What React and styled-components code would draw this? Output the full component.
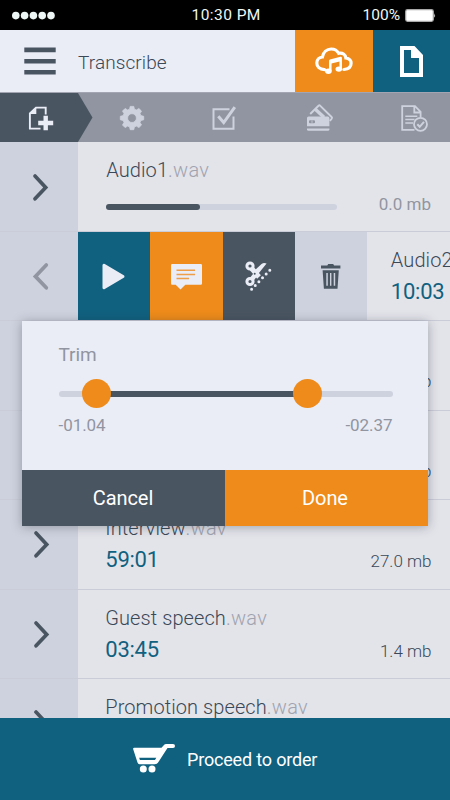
import React from "react";
import styled, { createGlobalStyle } from "styled-components";

const c = {
  slate: "#4a5562", ink: "#3a4857", teal: "#10617f", orange: "#ee8b1a", pale: "#eaedf6",
  mist: "#ced2de", row: "#e3e4ea", grey: "#9195a1", line: "#cacdd8",
};

const Global = createGlobalStyle`
  * { box-sizing: border-box; }
  body { margin: 0; font-family: Roboto, "Liberation Sans", sans-serif; }
  button { font: inherit; border: 0; padding: 0; margin: 0; }
  svg { display: block; flex: none; overflow: visible; }
`;

const Screen = styled.main`
  position: relative;
  width: 450px;
  height: 800px;
  display: flex;
  flex-direction: column;
  overflow: hidden;
  background: ${c.row};
`;

const StatusBar = styled.div`
  height: 30px;
  flex: none;
  display: grid;
  grid-template-columns: 179.5px auto 1fr;
  align-items: center;
  padding: 1px 14px 0 12px;
  background: #000;
  color: #eef7f5;
  font-size: 15.5px;
  line-height: 29px;
`;
const Clock = styled.span`
  letter-spacing: 0.45px;
`;
const Power = styled.div`
  display: flex;
  align-items: center;
  justify-content: flex-end;
  gap: 5px;
`;

const Header = styled.header`
  height: 63px;
  flex: none;
  display: flex;
  background: ${c.pale};
  border-bottom: 1px solid #a3a6b2;
`;
const MenuButton = styled.button`
  width: 78px;
  padding: 0 0 0 24px;
  background: none;
`;
const Title = styled.h1`
  flex: 1;
  margin: 0;
  font-size: 19px;
  font-weight: 350;
  line-height: 65px;
  letter-spacing: 0.1px;
  color: ${c.ink};
`;
const HeaderButton = styled.button`
  width: ${(p) => p.$w}px;
  display: flex;
  align-items: center;
  justify-content: center;
  background: ${(p) => p.$bg};
`;

const Steps = styled.nav`
  height: 49px;
  flex: none;
  display: flex;
  background: ${c.grey};
`;
const Step = styled.div`
  width: ${(p) => p.$w}px;
  display: flex;
  align-items: center;
  padding-left: ${(p) => p.$pad}px;
  padding-top: 1px;
  background: ${(p) => (p.$active ? c.slate : "transparent")};
  clip-path: ${(p) => (p.$active ? "polygon(0 0, 78px 0, 92.5px 24.5px, 78px 100%, 0 100%)" : "none")};
`;

const List = styled.section`
  flex: 1;
  min-height: 0;
  overflow: hidden;
`;
const Row = styled.div`
  height: ${(p) => p.$h}px;
  display: flex;
  background: ${c.row};
  border-bottom: 1px solid ${c.line};
`;
const Toggle = styled.button`
  width: 77.8px;
  flex: none;
  padding: ${(p) => p.$top || 32}px 0 0 ${(p) => p.$left || 33}px;
  display: flex;
  align-items: flex-start;
  background: ${c.mist};
`;
const Action = styled.button`
  width: 72.4px;
  flex: none;
  display: flex;
  align-items: center;
  justify-content: center;
  background: ${(p) => p.$bg};
`;
const Content = styled.div`
  flex: ${(p) => (p.$shifted ? "none" : "1")};
  width: ${(p) => (p.$shifted ? "372px" : "auto")};
  padding: 16px 18.5px 0 ${(p) => p.$left || 28.5}px;
`;
const Name = styled.div`
  height: 24px;
  line-height: 24px;
  font-size: 20px;
  font-weight: 350;
  letter-spacing: 0.08px;
  color: ${c.ink};
  white-space: nowrap;
`;
const Ext = styled.span`
  color: #a0a3af;
  font-weight: 300;
  letter-spacing: 0.25px;
`;
const Meta = styled.div`
  display: flex;
  justify-content: space-between;
  align-items: baseline;
  margin-top: 7px;
  line-height: 26px;
`;
const Time = styled.span`
  font-size: 22px;
  color: ${c.teal};
  letter-spacing: -0.25px;
`;
const Size = styled.span`
  margin-left: auto;
  font-size: 17px;
  font-weight: ${(p) => (p.$muted ? 400 : 350)};
  color: ${(p) => (p.$muted ? c.grey : c.ink)};
`;
const Upload = styled.div`
  display: flex;
  align-items: center;
  margin-top: 9px;
  padding-right: 0.5px;
  line-height: 26px;
`;
const Progress = styled.div`
  width: 231px;
  height: 6px;
  margin-top: 6px;
  border-radius: 3px;
  background: ${c.mist};
`;
const ProgressFill = styled.div`
  width: 94px;
  height: 6px;
  border-radius: 3px;
  background: ${c.slate};
`;

const Footer = styled.button`
  height: 82.5px;
  flex: none;
  display: flex;
  align-items: center;
  padding: 0 0 0 133px;
  gap: 12px;
  background: ${c.teal};
  color: #fff;
  font-size: 18px;
`;
const FooterLabel = styled.span`
  padding-top: 2px;
  letter-spacing: -0.18px;
`;

const Dialog = styled.div`
  position: absolute;
  left: 22px;
  top: 321px;
  width: 406px;
  height: 204.5px;
  display: flex;
  flex-direction: column;
  background: ${c.pale};
  box-shadow: 0 1px 10px rgba(30, 35, 50, 0.34);
`;
const DialogBody = styled.div`
  height: 149px;
  padding: 22px 35.5px 0 36.5px;
  color: ${c.grey};
`;
const DialogTitle = styled.div`
  font-size: 19px;
  line-height: 23px;
  letter-spacing: -0.1px;
`;
const Slider = styled.div`
  position: relative;
  height: 6px;
  margin-top: 25px;
  border-radius: 3px;
  background: ${c.mist};
`;
const Range = styled.div`
  position: absolute;
  left: 38px;
  width: 211px;
  height: 6px;
  background: ${c.slate};
`;
const Thumb = styled.div`
  position: absolute;
  left: ${(p) => p.$x}px;
  top: -11.8px;
  width: 29px;
  height: 29px;
  border-radius: 50%;
  background: ${c.orange};
`;
const Marks = styled.div`
  display: flex;
  justify-content: space-between;
  margin-top: 17px;
  font-size: 17px;
  line-height: 22px;
  letter-spacing: -0.05px;
`;
const DialogActions = styled.div`
  flex: 1;
  display: flex;
`;
const DialogButton = styled.button`
  width: 203px;
  padding: 1px ${(p) => p.$shift}px 0 0;
  background: ${(p) => p.$bg};
  color: #fff;
  font-size: 20px;
  letter-spacing: -0.1px;
`;

const Svg = ({ w, h, children, ...rest }) => (
  <svg width={w} height={h} viewBox={`0 0 ${w} ${h}`} fill="none" {...rest}>{children}</svg>
);

const Signal = () => (
  <Svg w={44} h={8} fill="#eef7f5">
    {[0, 1, 2, 3, 4].map((i) => <circle key={i} cx={3.8 + i * 8.8} cy="3.6" r="3.8" />)}
  </Svg>
);
const Battery = () => (
  <Svg w={31} h={13}>
    <rect x=".7" y=".7" width="27.6" height="11.6" rx="1.8" fill="#fff" stroke="#a9a9a9" strokeWidth="1.2" />
    <path d="M29.2 4.2q1.7 2.3 0 4.6z" fill="#ddd" />
  </Svg>
);
const MenuIcon = () => (
  <Svg w={32} h={28} fill={c.slate}>
    <path d="M.3.6H31.7V5.2H.3zM.3 12H31.7v4.6H.3zM.3 23H31.7v4.6H.3z" />
  </Svg>
);
const CloudMusic = () => (
  <Svg w={38} h={28}>
    <path d="M9.5 22.6C4.6 22.4 1.8 19.5 1.8 16c0-3.3 2.4-5.7 5.6-6C8.3 5 11.8 2 16.2 2c3.4 0 6 1.6 7.5 4.3 3.8-.9 6.8 1.3 7.2 4.7 3 .4 5.2 2.4 5.2 5.3 0 3.3-2.5 5.8-7.2 6.2" stroke="#fff" strokeWidth="3.2" strokeLinecap="round" />
    <path d="M15.3 24V13.7l10.4-2.7v11.2" stroke="#fff" strokeWidth="2.5" strokeLinejoin="round" />
    <path d="M15.3 13.2l10.4-2.6v3.6l-10.4 2.6z" fill="#fff" />
    <ellipse cx="13.4" cy="24.3" rx="3.3" ry="2.7" fill="#fff" />
    <ellipse cx="23.8" cy="22.1" rx="3.3" ry="2.7" fill="#fff" />
  </Svg>
);
const PageIcon = () => (
  <Svg w={23} h={31}>
    <path fillRule="evenodd" d="M0 0H14.5L23 9V31H0zM4 4V27H19V12H11V4z" fill="#fff" />
  </Svg>
);
const AddPage = () => (
  <Svg w={26} h={25} stroke={c.pale}>
    <path d="M12.5 22.6H1.9V7.5L8 1.6H17.7V8.5" strokeWidth="1.9" />
    <path d="M1.5 8 8.3 1V8z" fill={c.pale} stroke="none" />
    <path d="M17.7 9.8V24.2M10.2 17H25.2" strokeWidth="4.4" />
  </Svg>
);
const Gear = () => (
  <Svg w={26} h={24}>
    <path
      fillRule="evenodd"
      fill={c.mist}
      d="M10.6 3.2 11.2.4h3.6l.6 2.8 2 .8 2.5-1.5 2.6 2.6L21 7.6l.8 2 2.9.7v3.5l-2.9.7-.8 2 1.5 2.5-2.6 2.6-2.5-1.5-2 .8-.6 2.8h-3.6l-.6-2.8-2-.8-2.5 1.5-2.6-2.6L5 16.5l-.8-2-2.9-.7v-3.5l2.9-.7.8-2L3.5 5.1l2.6-2.6L8.6 4zM13 7.7a4.4 4.4 0 1 0 0 8.8 4.4 4.4 0 0 0 0-8.8z"
      stroke={c.mist} strokeWidth=".8" strokeLinejoin="round"
    />
  </Svg>
);
const CheckBox = () => (
  <Svg w={26} h={25} stroke={c.mist}>
    <path d="M17.5 3.3H1.5V22.8H21.5V10.5" strokeWidth="2" />
    <path d="M6.3 10.3 11.7 16.6 22.8 1.2" strokeWidth="3" />
  </Svg>
);
const Cards = () => (
  <Svg w={26} h={28}>
    <path d="M3.2 10 11.5 1.8q.9-.9 1.8 0L24.6 13q.9.9 0 1.8L22.8 16.8" stroke={c.mist} strokeWidth="1.9" />
    <path d="M8.3 5.2 17 13.3" stroke={c.mist} strokeWidth="3.4" />
    <path fillRule="evenodd" fill={c.mist} d="M1.6 12.5H20.8q1.6 0 1.6 1.6V22.2H0V14.1q0-1.6 1.6-1.6zM3 16.2q-1 0-1 1v1q0 1 1 1H7q1 0 1-1v-1q0-1-1-1z" />
    <path d="M0 24.5H22.4V25.3q0 1.5-1.5 1.5H1.5Q0 26.8 0 25.3z" fill={c.mist} />
    <path d="M5 16.5v2.4" stroke={c.mist} strokeWidth=".8" />
  </Svg>
);
const DocCheck = () => (
  <Svg w={28} h={27} stroke={c.mist}>
    <path d="M13.5 24.8H1.2V1.2H14L19.6 6.8V12M13.3 1.5V7.5H19.6" strokeWidth="1.8" />
    <path d="M4.3 11.2H16.3M4.3 14.6H13.5M4.3 18H12" strokeWidth="1.5" />
    <circle cx="19.5" cy="19.3" r="6.5" strokeWidth="1.8" />
    <path d="M16.3 19.3 18.7 21.8 23 16.8" strokeWidth="2" />
  </Svg>
);
const Chevron = ({ left }) => (
  <Svg w={16} h={27} strokeWidth="3.7" strokeLinecap="round" strokeLinejoin="miter" stroke={left ? c.grey : c.slate}>
    <path d={left ? "M13.3 2 2.4 13.4 13.3 24.8" : "M2 2 12.7 13.4 2 24.8"} />
  </Svg>
);
const Play = () => (
  <Svg w={23} h={27}>
    <path d="M2 2.3V24.7L21 13.5z" fill={c.pale} stroke={c.pale} strokeWidth="3" strokeLinejoin="round" />
  </Svg>
);
const Comment = () => (
  <Svg w={31} h={25}>
    <path d="M1.2 0H29.8Q31 0 31 1.2V19.5Q31 20.7 29.8 20.7H14.3L9.5 25.6 4.7 20.7H1.2Q0 20.7 0 19.5V1.2Q0 0 1.2 0z" fill={c.pale} />
    <path d="M5.5 6.3H24M5.5 10.4H24M5.5 14.4H18" stroke="#ee9d48" strokeWidth="1.5" />
  </Svg>
);
const Scissors = () => (
  <Svg w={28} h={30}>
    <g stroke={c.pale}>
      <circle cx="5" cy="5" r="3.1" strokeWidth="3" />
      <circle cx="5" cy="20.5" r="3.1" strokeWidth="3" />
      <path d="M6.7 7.5 14 16" strokeWidth="5" />
      <path d="M6.5 18.5 11.2 12.8" strokeWidth="4.6" />
    </g>
    <path d="M7.5 11.5 16.5 3Q18.8 1.1 21.6 2.5L11.5 15z" fill={c.pale} />
    <circle cx="9.7" cy="12.8" r="1" fill={c.slate} />
    <path d="M6.6 28.2 27 7" stroke={c.pale} strokeWidth="3" strokeLinecap="round" strokeDasharray="0 5.25" />
  </Svg>
);
const Trash = () => (
  <Svg w={20} h={25} fill={c.slate}>
    <path d="M0 1.4H6.3L7.2 0H12.2L13.1 1.4H19.4V4.4H0z" />
    <path fillRule="evenodd" d="M1.6 6.2H17.8L16.5 24.8H2.9zM5.3 9V21.7H6.8V9zM9 9V21.7H10.4V9zM12.7 9V21.7H14.2V9z" />
  </Svg>
);
const Cart = () => (
  <Svg w={42} h={29}>
    <path fillRule="evenodd" fill="#fff" d="M1.3 3.8H28.5L30.5 1.4Q31.6 0 33.5 0H40Q42 0 42 2T40 4H34.5L25.6 17.8Q24.2 20.2 21.8 20.2H6.5Q5 20.2 4.5 18.6L.2 5.2Q-.2 3.8 1.3 3.8zM6.2 13.8 6.9 16H22L23.3 13.8z" />
    <circle cx="10.3" cy="25" r="3.5" fill="#fff" />
    <circle cx="19" cy="25" r="3.5" fill="#fff" />
  </Svg>
);

const File = ({ h, name, time, size }) => (
  <Row $h={h}>
    <Toggle $top={31} $left={34}><Chevron /></Toggle>
    <Content $left={27.5}>
      <Name>{name}{name && <Ext>.wav</Ext>}</Name>
      <Meta><Time>{time}</Time><Size>{size}</Size></Meta>
    </Content>
  </Row>
);

export default function App() {
  return (
    <Screen>
      <Global />
      <StatusBar>
        <Signal />
        <Clock>10:30 PM</Clock>
        <Power><span>100%</span><Battery /></Power>
      </StatusBar>
      <Header>
        <MenuButton aria-label="Menu"><MenuIcon /></MenuButton>
        <Title>Transcribe</Title>
        <HeaderButton $w={78} $bg={c.orange}><CloudMusic /></HeaderButton>
        <HeaderButton $w={77} $bg={c.teal}><PageIcon /></HeaderButton>
      </Header>
      <Steps>
        <Step $w={93} $pad={27.5} $active><AddPage /></Step>
        <Step $w={93} $pad={25.5}><Gear /></Step>
        <Step $w={93} $pad={25.5}><CheckBox /></Step>
        <Step $w={93} $pad={28}><Cards /></Step>
        <Step $w={78} $pad={29}><DocCheck /></Step>
      </Steps>
      <List>
        <Row $h={90}>
          <Toggle><Chevron /></Toggle>
          <Content>
            <Name>Audio1<Ext>.wav</Ext></Name>
            <Upload>
              <Progress><ProgressFill /></Progress>
              <Size $muted>0.0 mb</Size>
            </Upload>
          </Content>
        </Row>
        <Row $h={89}>
          <Toggle $open $top={31}><Chevron left /></Toggle>
          <Action $bg={c.teal}><Play /></Action>
          <Action $bg={c.orange}><Comment /></Action>
          <Action $bg={c.slate}><Scissors /></Action>
          <Action $bg={c.mist}><Trash /></Action>
          <Content $shifted $left={23.5}>
            <Name>Audio2</Name>
            <Meta><Time>10:03</Time></Meta>
          </Content>
        </Row>
        <File h={90} size="mb" />
        <File h={89} size="mb" />
        <File h={90} name="Interview" time="59:01" size="27.0 mb" />
        <File h={89} name="Guest speech" time="03:45" size="1.4 mb" />
        <File h={89} name="Promotion speech" />
      </List>
      <Footer><Cart /><FooterLabel>Proceed to order</FooterLabel></Footer>
      <Dialog>
        <DialogBody>
          <DialogTitle>Trim</DialogTitle>
          <Slider><Range /><Thumb $x={23.3} /><Thumb $x={234.5} /></Slider>
          <Marks><span>-01.04</span><span>-02.37</span></Marks>
        </DialogBody>
        <DialogActions>
          <DialogButton $bg={c.slate} $shift={1}>Cancel</DialogButton>
          <DialogButton $bg={c.orange} $shift={3}>Done</DialogButton>
        </DialogActions>
      </Dialog>
    </Screen>
  );
}
